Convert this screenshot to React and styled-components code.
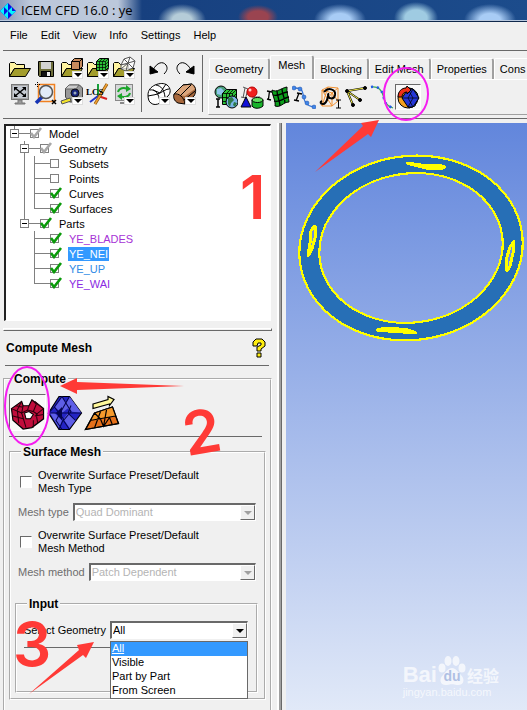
import { useState } from "react";
import styled, { createGlobalStyle, css } from "styled-components";

const palette = {
  face: "#f0f0f0",
  line: "#696969",
  gray: "#a0a0a0",
  disabled: "#b4b4b4",
  select: "#3399ff",
  mark: "#ff3a36",
  circle: "#f51df0",
};

const tabs = ["Geometry", "Mesh", "Blocking", "Edit Mesh", "Properties", "Cons"];
const menus = ["File", "Edit", "View", "Info", "Settings", "Help"];
const choices = ["All", "Visible", "Part by Part", "From Screen"];

const tree = [
  {
    name: "Model",
    state: "partial",
    children: [
      {
        name: "Geometry",
        state: "partial",
        children: [
          { name: "Subsets", state: "off" },
          { name: "Points", state: "off" },
          { name: "Curves", state: "on" },
          { name: "Surfaces", state: "on" },
        ],
      },
      {
        name: "Parts",
        state: "on",
        children: [
          { name: "YE_BLADES", state: "on", color: "#a633d6" },
          { name: "YE_NEI", state: "on", selected: true },
          { name: "YE_UP", state: "on", color: "#2f8be6" },
          { name: "YE_WAI", state: "on", color: "#8a2be2" },
        ],
      },
    ],
  },
];

/* ---------- icons ---------- */

const Svg = ({ size = 24, children }) => (
  <svg width={size} height={size} viewBox="0 0 24 24" fill="none" stroke="#000" strokeWidth="1" aria-hidden="true">
    {children}
  </svg>
);

const Drop = () => (
  <g>
    <rect x="12.500" y="15.500" width="10" height="7" fill="#fff" stroke="#ddd" />
    <path d="M14 17h8l-4 4z" fill="#000" stroke="none" />
  </g>
);

const Folder = () => (
  <g>
    <path d="M1.500 20.500v-13l1-1h4l2 2h8v4h-10z" fill="#fff3a0" />
    <path d="M1.500 20.500l5-8h16l-5 8z" fill="#a39d2c" />
  </g>
);

const OpenIcon = () => <Svg><Folder /></Svg>;
const SaveIcon = () => (
  <Svg>
    <path d="M4.500 5.500h15v15h-14l-1-1z" fill="#6d6d3a" />
    <rect x="7" y="6" width="10" height="7" fill="#d2d2d2" stroke="none" />
    <rect x="7.500" y="15.500" width="9" height="5" fill="#111" />
    <rect x="13" y="16" width="3" height="4" fill="#eee" stroke="none" />
  </Svg>
);
const GeomFileIcon = () => (
  <Svg>
    <Folder />
    <path d="M11.500 5.500l3-3h8v8l-3 3h-8z" fill="#c68a5c" />
    <path d="M11.500 5.500h8v8M19.500 5.500l3-3" />
    <Drop />
  </Svg>
);
const MeshFileIcon = () => (
  <Svg>
    <Folder />
    <path d="M10.500 5.500l3-3h9v9l-3 3h-9z" fill="#2cc238" />
    <path d="M10.500 5.500h9v9M19.500 5.500l3-3M13.500 5.500v9M16.500 5.500v9M10.500 8.500h9l3-3M10.500 11.500h9l3-3M13.500 5.500l3-3M16.500 5.500l3-3" strokeWidth=".7" />
    <Drop />
  </Svg>
);
const BlockFileIcon = () => (
  <Svg>
    <Folder />
    <path d="M9 9l3-6 6-2 5 4-2 7-7 3-5-2zM9 9l7-2 7-2M12 3l4 4 5 5M16 7l-2 8M18 1l-2 6-7 6" fill="#fff" fillOpacity=".8" stroke="#555" />
    <Drop />
  </Svg>
);
const FitIcon = () => (
  <Svg>
    <rect x="3.500" y="2.500" width="17" height="15" fill="#a9a9a9" stroke="#777" />
    <rect x="5" y="4" width="14" height="12" fill="#c6cbd3" stroke="none" />
    <path d="M7 6l10 8M17 6l-10 8" strokeWidth="1.500" />
    <path d="M6 5h4l-4 4zM18 5h-4l4 4zM6 15h4l-4-4zM18 15h-4l4-4z" fill="#000" stroke="none" />
    <path d="M10 18h4v3h3v1H7v-1h3z" fill="#999" stroke="#777" />
  </Svg>
);
const ZoomIcon = () => (
  <Svg>
    <rect x="4.500" y="2.500" width="16" height="17" stroke="#f08020" strokeWidth="1.500" />
    <path d="M8 15l-6 6" stroke="#1635b5" strokeWidth="3.500" />
    <circle cx="12" cy="10" r="6.500" fill="#e2ecf8" stroke="#555" strokeWidth="1.500" />
    <path d="M18 18l4 4M22 18l-4 4" strokeWidth="1.500" />
    <path d="M1 2.500h5M3.500 0v5" strokeDasharray="1 1" />
  </Svg>
);
const MeasureIcon = () => (
  <Svg>
    <path d="M5.500 15v-8l4-4h10l3 3v11l-4 3h-9z" fill="#999" stroke="#444" />
    <path d="M5 7l4-4h10l-3 4z" fill="#ccc" stroke="#666" />
    <circle cx="15" cy="11" r="4" fill="#16227a" stroke="#111" />
    <circle cx="15" cy="11" r="1.500" fill="#9ab" stroke="none" />
    <path d="M1 19l9-3 1 3-9 3z" fill="#f1e22c" stroke="#555" />
    <Drop />
  </Svg>
);
const LcsIcon = () => (
  <Svg>
    <path d="M12 14V2" stroke="#16a038" strokeWidth="2" />
    <path d="M12 14l-8 6" stroke="#2036c8" strokeWidth="2" />
    <path d="M12 14l9 3" stroke="#d82020" strokeWidth="2" />
    <path d="M9 22L21 2" stroke="#8a5414" strokeWidth="3" />
    <path d="M9 22L21 2" stroke="#f0a030" strokeWidth="1.500" />
    <text x="0" y="13" fontSize="9" fontFamily="Liberation Serif, serif" fontWeight="bold" fill="#000" stroke="none">LCS</text>
  </Svg>
);
const RefreshIcon = () => (
  <Svg>
    <rect x="3.500" y="2.500" width="17" height="16" fill="#d6d8da" stroke="#888" />
    <path d="M6 10c1-4 6-5 9-3M18 11c-1 4-6 5-9 3" stroke="#1ba52a" strokeWidth="2" />
    <path d="M14 3l5 4-5 3zM10 11l-5 3 5 4z" fill="#1ba52a" stroke="none" />
    <path d="M8 21h8" stroke="#888" strokeWidth="2" />
    <Drop />
  </Svg>
);
const UndoIcon = () => (
  <Svg>
    <path d="M6 14C10 6 16 5 19 9c2 3 1 6-2 9" />
    <path d="M3 10v8l8-2z" fill="#000" />
  </Svg>
);
const RedoIcon = () => (
  <Svg>
    <path d="M18 14C14 6 8 5 5 9c-2 3-1 6 2 9" />
    <path d="M21 10v8l-8-2z" fill="#000" />
  </Svg>
);
const WireIcon = () => (
  <Svg>
    <path d="M1 13c0-5 3-8 7-10 5-2 9-2 12 0 4 3 4 8 1 11l-8 7c-3 2-7 2-9 0-2-1-3-4-3-8z" fill="#fff" />
    <path d="M3 8c5-1 9 3 10 13M9 3c5 1 8 4 9 12M1 14c4-1 8-1 12-3s6-4 9-4M6 8l7 3 6-9" />
    <Drop />
  </Svg>
);
const SolidIcon = () => (
  <Svg>
    <path d="M1 12l9-9 9-1c5 3 4 9 2 12l-9 8-7-1c-4-2-5-6-4-9z" fill="#a8683c" />
    <path d="M1 12l9-9 9-1 3 5-10 7z" fill="#dba67c" stroke="none" />
    <path d="M1 12c5-1 10 3 11 10M1 12l9-9 9-1M7 14L18 3M11 18l11-9" />
    <Drop />
  </Svg>
);
const GlobalIcon = () => (
  <Svg>
    <circle cx="7" cy="7" r="6" fill="#49a07a" />
    <path d="M3 4l4-1 3 3-3 4-4-1z" fill="#8fc5ec" stroke="none" />
    <path d="M8.500 8.500l4-4h10v11l-3 4h-11z" fill="#2cc238" />
    <path d="M8.500 8.500h10v11M18.500 8.500l4-4M12.500 8.500v11M15.500 8.500v11M8.500 12.500h10l4-4M8.500 16.500h10M12.500 8.500l4-4M15.500 8.500l4-4" strokeWidth=".8" />
    <circle cx="18" cy="17" r="6" fill="#7ab5e8" />
    <path d="M14 13l4-1 2 3-3 3-1 4-2-3zM20 17l3 1-2 4-2-2z" fill="#2d7a48" stroke="none" />
    <path d="M2 14h4M4 14v8M2 22h4" strokeWidth="1.500" />
  </Svg>
);
const PartIcon = () => (
  <Svg>
    <path d="M3 2l5 2M5 3L3 13M1 12l5 1M8 4l-3 11M12 12h8" stroke="#555" />
    <circle cx="12" cy="7" r="5" fill="#f02020" stroke="#b00" />
    <circle cx="10" cy="5" r="1.500" fill="#ffd0d0" stroke="none" />
    <path d="M6 12l5 10H1z" fill="#1010d8" />
    <path d="M12 15v6c2 3 8 3 11 0v-6z" fill="#17b32a" />
    <ellipse cx="17.500" cy="15" rx="5.500" ry="2.500" fill="#5fe060" />
  </Svg>
);
const SurfaceSetupIcon = () => (
  <Svg>
    <path d="M6 5c5 3 9-2 15-3-1 5 2 11 2 15-6 0-8 6-14 4 1-5-3-11-3-16z" fill="#0ca11c" />
    <path d="M7 10c6 2 9-3 15-3M8 16c6 2 9-3 15-4M11 6c0 5 3 10 3 15M16 4c0 5 3 9 3 14" strokeWidth="1.300" />
    <path d="M1 6l5 1M3.500 6l-1 8M1 14l4 1" strokeWidth="1.300" />
  </Svg>
);
const CurveSetupIcon = () => (
  <Svg>
    <path d="M2 3c5 0 8 0 9 6s2 12 11 13" stroke="#3b78d8" strokeWidth="1.300" />
    <g fill="#3f86ea" stroke="#1d4aa0" strokeWidth=".5">
      <circle cx="2" cy="3" r="2" /><circle cx="8" cy="4" r="2" /><circle cx="12" cy="12" r="2" />
      <circle cx="15" cy="18" r="2" /><circle cx="22" cy="22" r="2" />
    </g>
    <path d="M5 8l5 1M7 8l-3 8M2 15l5 1" strokeWidth="1.300" />
  </Svg>
);
const DensityIcon = () => (
  <Svg>
    <path d="M4 5l6-3 10 1v13l-6 5H4zM4 5l10 3v13M14 8l6-5M4 5l10 16M4 21l10-13 6 8M10 2l-6 19" stroke="#f09030" />
    <path d="M6 7c4-5 12-3 11 3-1 5-7 4-7 0 1-5 0 9-5 9-3 0-3-2-1-3" strokeWidth="2" />
    <path d="M18 15h5M20.500 15v8M18 23h5" />
  </Svg>
);
const ConnectIcon = () => (
  <Svg>
    <path d="M3 6l18-3M3 6l13 9M3 6l6 14" stroke="#000" strokeWidth="2" />
    <path d="M3 6l18-3M3 6l13 9M3 6l6 14" stroke="#f3ed4a" />
    <g fill="#000"><circle cx="3" cy="6" r="1.500" /><circle cx="21" cy="3" r="1.500" /><circle cx="16" cy="15" r="1.500" /><circle cx="9" cy="20" r="1.500" /></g>
  </Svg>
);
const MeshCurveIcon = () => (
  <Svg>
    <path d="M1 2c6-1 10 1 12 8s2 10 10 13" stroke="#3aa65c" strokeWidth="1.300" />
    <path d="M1 2c6-1 10 1 12 8s2 10 10 13" stroke="#225be8" strokeWidth="2.500" strokeDasharray="2 4" />
  </Svg>
);
const ComputeIcon = () => (
  <Svg>
    <circle cx="12" cy="13" r="10" fill="#f4a020" />
    <path d="M13 3a10 10 0 0 1 9 8l-3 10-6 2z" fill="#5bc0c8" />
    <path d="M12 4h5l6 9-6 9h-5l-6-9z" fill="#2436d8" />
    <path d="M12 4l5 9-5 9M17 4l-5 9 5 9M6 13h17" strokeWidth=".7" />
    <path d="M2 12c0-6 4-9 8-9l1-2 4 4-4 4v-2c-3 0-5 2-5 5z" fill="#f03018" />
  </Svg>
);
const ShellIcon = () => (
  <Svg size={36}>
    <path d="M1 9l7-5 1 3h4l2-4 8 6v7l-8 6-6 1-7-6z" fill="#c00d3c" strokeWidth=".8" />
    <path d="M1 9l7 3 3 10M8 4l-3 6M9 7l-1 5 4-2 4 1 2-5M15 3l3 3-2 5 3 2M5 10l1 9M2 14l7 2M23 9l-5 4 1 6M13 7l-1 3M23 13l-6 1M4 7l5 1M17 4l6 5M16 17v5" stroke="#2b000c" strokeWidth=".7" />
    <path d="M10 12l3-1 3 2-2 3h-3z" fill="#fff" strokeWidth=".7" />
  </Svg>
);
const VolumeIcon = () => (
  <Svg size={36}>
    <path d="M8 1h7l8 11-8 11H8L1 12z" fill="#2424c4" strokeWidth=".8" />
    <path d="M10 1l5 7-5 4-5-4zM15 1l8 11-7-1-4-4zM5 12l5 5-2 5-6-10zM14 12l5 5-4 5-4-6z" fill="#5e5ee6" stroke="none" />
    <path d="M10 1l-5 7 6 8-3 7M10 1l6 10-5 6 4 6M5 8l-4 4h22M15 1l-4 7-5 9 4 6M19 17l-5-5 2-5" stroke="#050550" strokeWidth=".7" />
    <path d="M10 8v9l-4-5z" fill="#050550" stroke="none" />
  </Svg>
);
const PrismIcon = () => (
  <Svg size={36}>
    <path d="M6 6l10-3V1l4 2-3 4V6L6 9z" fill="#fff89a" strokeWidth=".8" />
    <path d="M7 12l12-4 4 11-22 4z" fill="#e5701a" strokeWidth=".8" />
    <path d="M7 12l12-4 2 6-17 3z" fill="#f59a2c" stroke="none" />
    <path d="M7 12l12-4 4 11-22 4zM4 17l17-3M11 11l-4 11M15 10l-2 11M11 16l2 5 4-6 2 5M7 12l4 4" strokeWidth=".8" />
  </Svg>
);

const fileTools = [
  ["Open project", OpenIcon], ["Save project", SaveIcon], ["Geometry file", GeomFileIcon],
  ["Mesh file", MeshFileIcon], ["Blocking file", BlockFileIcon], ["Fit window", FitIcon],
  ["Box zoom", ZoomIcon], ["Measure", MeasureIcon], ["Local coordinates", LcsIcon], ["Refresh", RefreshIcon],
];
const viewTools = [["Undo", UndoIcon], ["Redo", RedoIcon], ["Wire frame", WireIcon], ["Solid", SolidIcon]];
const meshTools = [
  ["Global setup", GlobalIcon], ["Part setup", PartIcon], ["Surface setup", SurfaceSetupIcon],
  ["Curve setup", CurveSetupIcon], ["Density", DensityIcon], ["Connectors", ConnectIcon],
  ["Mesh curve", MeshCurveIcon], ["Compute mesh", ComputeIcon, true],
];
const computeTools = [["Surface mesh", ShellIcon, true], ["Volume mesh", VolumeIcon], ["Prism mesh", PrismIcon]];

/* ---------- pieces ---------- */

const Tools = ({ items, size }) =>
  items.map(([name, Icon, pressed]) => (
    <ToolButton key={name} type="button" aria-label={name} $pressed={pressed} $size={size}>
      <Icon />
    </ToolButton>
  ));

const TreeNode = ({ node }) => {
  const [checked, setChecked] = useState(node.state !== "off");
  return (
    <TreeItem>
      <TreeRow>
        {node.children ? <Toggle type="button" aria-label={`Collapse ${node.name}`} /> : <Branch $width={9} $leaf />}
        <Branch $width={11} />
        <TreeLabel>
          <TreeCheck type="checkbox" checked={checked} onChange={() => setChecked(!checked)} />
          {checked && (
            <Tick viewBox="0 0 14 12" aria-hidden="true">
              <path d="M2 6l3 4 7-9" fill="none" stroke={node.state === "partial" ? "#a8a8a8" : "#0a9a0a"} strokeWidth="2.600" />
            </Tick>
          )}
          <NodeName $color={node.color} $selected={node.selected}>{node.name}</NodeName>
        </TreeLabel>
      </TreeRow>
      {node.children && (
        <TreeList>
          {node.children.map((child) => <TreeNode key={child.name} node={child} />)}
        </TreeList>
      )}
    </TreeItem>
  );
};

const Combo = ({ id, label, value, disabled, children }) => (
  <Field>
    <FieldLabel htmlFor={id} $disabled={disabled}>{label}</FieldLabel>
    <SelectBox>
      <Select id={id} defaultValue={value} disabled={disabled}>
        {(disabled ? [value] : choices).map((item) => <option key={item}>{item}</option>)}
      </Select>
      <Arrow $disabled={disabled} />
      {children}
    </SelectBox>
  </Field>
);

const Ring = () => (
  <RingDrawing width="241" height="240" viewBox="286 123 241 240" aria-hidden="true">
    <g stroke="#ffff00" shapeRendering="crispEdges">
      <g transform="rotate(-7.800 411 248)">
        <path
          fillRule="evenodd"
          fill="#276fb6"
          strokeWidth="2.200"
          d="M299 248a112 92 0 1 0 224 0a112 92 0 1 0 -224 0zM319 248a92 74.500 0 1 0 184 0a92 74.500 0 1 0 -184 0z"
        />
      </g>
      <g fill="#6f90dd" strokeWidth="3" strokeLinejoin="round">
        <path d="M407 163l14 2 18 0 6 2-5 2-14-1-12-3z" />
        <path d="M377 330l8-2 14 1 9 1 8 3-13-1-15-1z" />
        <path d="M314 226l2 2-1 10-3 11-4 7 2-13 1-12z" />
        <path d="M514 241l-1 12-3 13-3 5-1-4 1-10 3-10z" />
      </g>
    </g>
  </RingDrawing>
);

const Watermark = () => (
  <WatermarkBox>
    <WatermarkRow>
      <Brand>Bai</Brand>
      <Paw>
        <svg width="30" height="30" viewBox="0 0 30 30" fill="#fff" aria-hidden="true">
          <ellipse cx="5" cy="12" rx="3.500" ry="4.500" />
          <ellipse cx="11" cy="5" rx="3.500" ry="5" />
          <ellipse cx="19" cy="5" rx="3.500" ry="5" />
          <ellipse cx="25" cy="12" rx="3.500" ry="4.500" />
          <path d="M15 12c4 0 6 4 9 7 5 5 2 11-4 10-4-1-6-1-10 0-6 1-9-5-4-10 3-3 5-7 9-7z" />
        </svg>
        <PawText>du</PawText>
      </Paw>
      <BrandCjk>经验</BrandCjk>
    </WatermarkRow>
    <Site>jingyan.baidu.com</Site>
  </WatermarkBox>
);

// red arrows, numbers and circles of the tutorial
const Notes = () => (
  <NotesLayer width="527" height="710" viewBox="0 0 527 710">
    <g fill="none" stroke={palette.circle} strokeWidth="2">
      <ellipse cx="406" cy="94" rx="22" ry="26" />
      <ellipse cx="27" cy="406" rx="22" ry="39" />
    </g>
    <g fill={palette.mark}>
      <path d="M315 172L363 126 361 123 379 120 371 137 368 134z" />
      <path d="M60 386L77 378 77 382 184 386 77 390 77 394z" />
      <path d="M29 694L79 650 77 645 94 642 86 658 83 655z" />
    </g>
    <NoteText x="240" y="219">1</NoteText>
    <NoteText x="183" y="453" transform="rotate(-10 203 432)">2</NoteText>
    <NoteText x="13" y="666">3</NoteText>
  </NotesLayer>
);

const App = () => {
  const [tab, setTab] = useState("Mesh");
  const [picked, setPicked] = useState("All");

  return (
    <>
      <GlobalStyle />
      <Window>
        <TitleBar>
          <svg width="16" height="16" viewBox="0 0 16 16" aria-hidden="true">
            <path d="M8 0l8 8-8 8-8-8z" fill="#0a10e0" />
            <path d="M8 0v8L4 4zM4 4v8L0 8zM12 4v8L8 8zM8 8v8l-4-4zM12 4l-4 4 0 0zM12 12l4-4-4 0z" fill="#00f6ff" />
          </svg>
          <Title>ICEM CFD 16.0 : ye</Title>
        </TitleBar>
        <MenuBar>
          {menus.map((menu) => <MenuButton key={menu} type="button">{menu}</MenuButton>)}
        </MenuBar>
        <Toolbar>
          <ToolGroup $columns={5}><Tools items={fileTools} size={26} /></ToolGroup>
          <ToolGroup $columns={2}><Tools items={viewTools} size={26} /></ToolGroup>
          <Ribbon>
            <TabList role="tablist">
              {tabs.map((name) => (
                <Tab key={name} type="button" role="tab" aria-selected={tab === name} $active={tab === name} onClick={() => setTab(name)}>
                  {name}
                </Tab>
              ))}
            </TabList>
            <RibbonPanel><Tools items={meshTools} size={26} /></RibbonPanel>
          </Ribbon>
        </Toolbar>
        <Body>
          <Side>
            <TreeBox>
              <TreeList>{tree.map((node) => <TreeNode key={node.name} node={node} />)}</TreeList>
            </TreeBox>
            <Sash />
            <PanelHeader>
              <PanelTitle>Compute Mesh</PanelTitle>
              <HelpButton type="button" aria-label="Help on this panel">
                <svg width="14" height="20" viewBox="0 0 14 20" aria-hidden="true">
                  <path d="M1 8V4l3-3h6l3 3v4L9 11v2H5v-4l4-2V5H6l-1 3zM5 15h4v4H5z" fill="#ffee10" stroke="#000" />
                </svg>
              </HelpButton>
            </PanelHeader>
            <ComputeGroup>
              <Legend>Compute</Legend>
              <ComputeRow><Tools items={computeTools} size={37} /></ComputeRow>
              <Group>
                <Legend>Surface Mesh</Legend>
                <CheckRow>
                  <CheckBox type="checkbox" />
                  <span>Overwrite Surface Preset/Default<br />Mesh Type</span>
                </CheckRow>
                <Combo id="mesh-type" label="Mesh type" value="Quad Dominant" disabled />
                <CheckRow>
                  <CheckBox type="checkbox" />
                  <span>Overwrite Surface Preset/Default<br />Mesh Method</span>
                </CheckRow>
                <Combo id="mesh-method" label="Mesh method" value="Patch Dependent" disabled />
                <InputGroup>
                  <Legend>Input</Legend>
                  <Combo id="geometry" label="Select Geometry" value="All">
                    <Options role="listbox" aria-label="Select Geometry">
                      {choices.map((item) => (
                        <Option key={item} role="option" aria-selected={picked === item} $picked={picked === item} onClick={() => setPicked(item)}>
                          {item}
                        </Option>
                      ))}
                    </Options>
                  </Combo>
                  <Rule />
                </InputGroup>
              </Group>
            </ComputeGroup>
          </Side>
          <Divider />
          <Viewport>
            <Ring />
            <Watermark />
          </Viewport>
        </Body>
        <Notes />
      </Window>
    </>
  );
};

const GlobalStyle = createGlobalStyle`
  * {
    box-sizing: border-box;
  }
  body {
    margin: 0;
    background: ${palette.face};
    font-family: "Liberation Sans", Arial, "Noto Sans CJK SC", sans-serif;
    font-size: 11px;
    line-height: 13px;
    color: #000;
  }
  button, select, input {
    margin: 0;
    padding: 0;
    border: 0;
    background: none;
    font: inherit;
    color: inherit;
  }
`;

const Window = styled.div`
  position: relative;
  display: flex;
  flex-direction: column;
  min-height: 100vh;
  overflow: hidden;
`;
const TitleBar = styled.header`
  display: flex;
  align-items: center;
  gap: 5px;
  height: 22px;
  border-bottom: 1px solid #10284c;
  box-shadow: inset 0 -1px #b8c8de;
  background:
    radial-gradient(ellipse 24px 16px at 182px 20px, #b5ccd8 40%, transparent),
    radial-gradient(ellipse 20px 12px at 258px 17px, #9a4450 50%, transparent),
    radial-gradient(ellipse 26px 16px at 340px 20px, #a8ccf5 40%, transparent),
    radial-gradient(ellipse 22px 16px at 416px 18px, #9fcbe2 50%, transparent),
    radial-gradient(ellipse 26px 16px at 490px 20px, #a8ccf5 40%, transparent),
    linear-gradient(90deg, #8493b4, #bcc8db 30px, #bcc8db 118px, #17407f 142px, #1c4c8c);
`;
const Title = styled.h1`
  margin: 0;
  font-family: "Open Sans", "Noto Sans", sans-serif;
  font-size: 13px;
  font-weight: 400;
`;
const MenuBar = styled.nav`
  display: flex;
  gap: 13px;
  height: 29px;
  margin-left: 3px;
  padding: 0 7px;
  border-bottom: 1px solid ${palette.line};
`;
const MenuButton = styled.button`
  height: 26px;
`;
const Toolbar = styled.div`
  display: flex;
  height: 68px;
  margin-left: 3px;
  padding-top: 4px;
  border-bottom: 1px solid ${palette.line};
`;
const ToolGroup = styled.div`
  display: grid;
  grid-template-columns: repeat(${(props) => props.$columns}, 26px);
  grid-auto-rows: 26px;
  flex-shrink: 0;
  height: 57px;
  padding: 0 4px;
  border-right: 1px solid ${palette.line};
`;
const ToolButton = styled.button`
  display: flex;
  align-items: center;
  justify-content: center;
  width: ${(props) => props.$size}px;
  height: ${(props) => props.$size}px;
  ${(props) =>
    props.$pressed &&
    css`
      border: 1px solid;
      border-color: ${palette.line} #fff #fff ${palette.line};
      background: #f8f8f8;
    `}
`;
const Ribbon = styled.div`
  display: flex;
  flex: 1;
  flex-direction: column;
  min-width: 0;
  margin-left: 5px;
  overflow: hidden;
`;
const TabList = styled.div`
  display: flex;
  align-items: flex-end;
  height: 24px;
  padding-left: 1px;
`;
const Tab = styled.button`
  flex-shrink: 0;
  height: ${(props) => (props.$active ? 24 : 21)}px;
  padding: ${(props) => (props.$active ? "0 7px 4px" : "0 5px")};
  border: solid;
  border-width: 1px 2px 0 1px;
  border-color: #fff ${palette.gray} #fff #fff;
  border-radius: 2px 3px 0 0;
`;
const RibbonPanel = styled.div`
  display: flex;
  align-items: center;
  flex-shrink: 0;
  height: 36px;
  padding-left: 4px;
  border: solid;
  border-width: 1px 0 1px 1px;
  border-color: #fff #fff ${palette.gray} #fff;
`;
const Body = styled.main`
  display: flex;
  flex: 1;
`;
const Side = styled.section`
  display: flex;
  flex-direction: column;
  flex: 0 0 272px;
  padding: 5px 0 0 3px;
`;
const TreeBox = styled.div`
  height: 197px;
  margin: 0 1px;
  padding-left: 4px;
  border: solid;
  border-width: 2px 1px 1px 2px;
  border-color: #222 #fff #fff #222;
  background: #fff;
`;
const TreeList = styled.ul`
  margin: 0;
  padding: 0 0 0 10px;
  list-style: none;
  ${TreeBox} > & {
    padding-left: 0;
  }
`;
const TreeItem = styled.li`
  position: relative;
  &::before {
    content: "";
    position: absolute;
    top: 0;
    left: 4px;
    width: 1px;
    height: 100%;
    background: #808080;
  }
  &:last-child::before {
    height: 8px;
  }
`;
const TreeRow = styled.div`
  display: flex;
  align-items: center;
  height: 15px;
`;
const Toggle = styled.button`
  position: relative;
  width: 9px;
  height: 9px;
  border: 1px solid #808080;
  background: linear-gradient(#000, #000) center / 5px 1px no-repeat #fff;
`;
const Branch = styled.span`
  width: ${(props) => props.$width}px;
  height: 1px;
  background: ${(props) => (props.$leaf ? "linear-gradient(90deg, #fff 4px, #808080 4px)" : "#808080")};
`;
const TreeLabel = styled.label`
  position: relative;
  display: flex;
  align-items: center;
  gap: 9px;
`;
const TreeCheck = styled.input`
  width: 9px;
  height: 9px;
  border: 1px solid #808080;
  background: #fff;
  appearance: none;
`;
const Tick = styled.svg`
  position: absolute;
  top: 0;
  left: -1px;
  width: 14px;
  height: 12px;
`;
const NodeName = styled.span`
  height: 14px;
  padding: 0 1px;
  line-height: 14px;
  color: ${(props) => (props.$selected ? "#fff" : props.$color || "#000")};
  background: ${(props) => (props.$selected ? palette.select : "none")};
`;
const Sash = styled.div`
  height: 3px;
  margin-top: 7px;
  border: 1px solid;
  border-color: #fff ${palette.line} ${palette.line} #fff;
`;
const PanelHeader = styled.div`
  display: flex;
  align-items: center;
  justify-content: space-between;
  height: 35px;
  margin: 0 3px 0 2px;
  padding: 0 3px 0 1px;
  border-bottom: 1px solid ${palette.line};
`;
const PanelTitle = styled.h2`
  margin: 0;
  font-size: 12px;
  font-weight: 700;
`;
const HelpButton = styled.button`
  height: 20px;
`;
const Group = styled.fieldset`
  min-width: 0;
  margin: 8px 0 0;
  padding: 10px 8px 5px 7px;
  border: 2px groove #fff;
`;
const ComputeGroup = styled(Group)`
  flex: 1;
  margin: 6px 0 0;
  padding: 8px 4px 0;
  border-bottom: 0;
`;
const InputGroup = styled(Group)`
  height: 96px;
  margin: 16px -2px 0 -3px;
`;
const Legend = styled.legend`
  padding: 0 2px;
  margin-left: 3px;
  font-size: 12px;
  font-weight: 700;
  line-height: 14px;
`;
const ComputeRow = styled.div`
  display: flex;
  height: 43px;
  margin-right: 4px;
  border-bottom: 1px solid ${palette.line};
`;
const CheckRow = styled.label`
  display: flex;
  align-items: center;
  gap: 6px;
  height: 26px;
  margin-left: 2px;
`;
const CheckBox = styled.input`
  width: 12px;
  height: 12px;
  border: 1px solid;
  border-color: ${palette.line} #fff #fff ${palette.line};
  background: #fff;
  appearance: none;
`;
const Field = styled.div`
  display: flex;
  align-items: center;
  gap: 4px;
  height: 18px;
  margin: 8px 0;
  ${InputGroup} > & {
    margin: 0;
  }
`;
const FieldLabel = styled.label`
  color: ${(props) => (props.$disabled ? "#6d6d6d" : "#000")};
`;
const SelectBox = styled.div`
  position: relative;
  flex: 1;
`;
const Select = styled.select`
  display: block;
  width: 100%;
  height: 18px;
  padding: 0 18px 0 1px;
  border: 1px solid;
  border-color: ${palette.line} #fff #fff ${palette.line};
  border-width: 2px 1px 1px 2px;
  background: #fff;
  appearance: none;
  &:disabled {
    color: ${palette.disabled};
    opacity: 1;
  }
`;
const Arrow = styled.span`
  position: absolute;
  top: 2px;
  right: 1px;
  width: 15px;
  height: 15px;
  border: 1px solid;
  border-color: #fff ${palette.line} ${palette.line} #fff;
  background: ${palette.face};
  pointer-events: none;
  &::after {
    content: "";
    position: absolute;
    top: 5px;
    left: 3px;
    border: solid transparent;
    border-width: 4px 4px 0;
    border-top-color: ${(props) => (props.$disabled ? palette.gray : "#000")};
  }
`;
const Options = styled.ul`
  position: absolute;
  top: 20px;
  left: 0;
  right: 0;
  z-index: 1;
  margin: 0;
  padding: 0;
  border: 1px solid ${palette.line};
  background: #fff;
  list-style: none;
`;
const Option = styled.li`
  height: 14px;
  padding-left: 1px;
  color: ${(props) => (props.$picked ? "#fff" : "#000")};
  background: ${(props) => (props.$picked ? palette.select : "none")};
  text-decoration: ${(props) => (props.$picked ? "underline" : "none")};
`;
const Rule = styled.hr`
  margin: 8px 0 0;
  border: 0;
  border-top: 1px solid ${palette.line};
`;
const Divider = styled.div`
  flex: 0 0 5px;
  margin: 4px 4px 0 5px;
  border: solid;
  border-width: 0 1px 0 2px;
  border-color: #fff ${palette.line};
  border-left-color: #fff;
  background: ${palette.gray};
`;
const Viewport = styled.section`
  position: relative;
  flex: 1;
  min-width: 0;
  margin-top: 4px;
  overflow: hidden;
  background: linear-gradient(#6286dc, #e1e9f8);
`;
const RingDrawing = styled.svg`
  display: block;
`;
const WatermarkBox = styled.div`
  position: absolute;
  right: 28px;
  bottom: 11px;
  color: #fff;
  opacity: 0.7;
`;
const WatermarkRow = styled.div`
  display: flex;
  align-items: flex-end;
  height: 32px;
`;
const Brand = styled.span`
  font-size: 22px;
  font-weight: 700;
  line-height: 22px;
`;
const Paw = styled.span`
  position: relative;
  height: 30px;
`;
const PawText = styled.span`
  position: absolute;
  right: 0;
  bottom: 3px;
  left: 0;
  font-size: 14px;
  font-weight: 700;
  text-align: center;
  color: #9eb2dc;
`;
const BrandCjk = styled.span`
  font-family: "Noto Sans CJK SC", sans-serif;
  font-size: 16px;
  font-weight: 700;
  line-height: 22px;
`;
const Site = styled.div`
  font-size: 11px;
`;
const NotesLayer = styled.svg`
  position: absolute;
  top: 0;
  left: 0;
  z-index: 2;
  pointer-events: none;
`;
const NoteText = styled.text`
  font-family: Inter, sans-serif;
  font-size: 60px;
  font-weight: 600;
  fill: ${palette.mark};
`;

export default App;
